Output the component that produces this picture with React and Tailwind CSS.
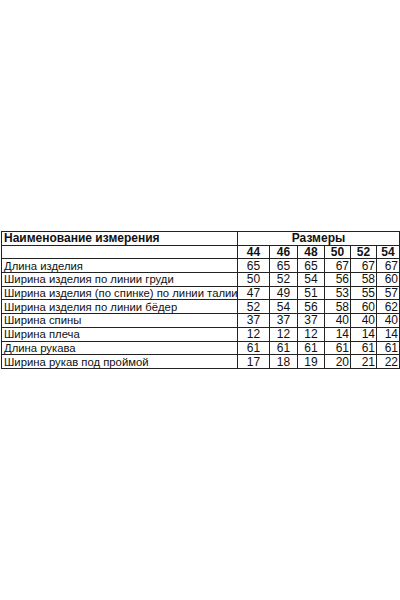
const sizes = ["44", "46", "48", "50", "52", "54"];

const rows = [
  { name: "Длина изделия", v: [65, 65, 65, 67, 67, 67] },
  { name: "Ширина изделия по линии груди", v: [50, 52, 54, 56, 58, 60] },
  { name: "Ширина изделия (по спинке) по линии талии", v: [47, 49, 51, 53, 55, 57] },
  { name: "Ширина изделия по линии бёдер", v: [52, 54, 56, 58, 60, 62] },
  { name: "Ширина спины", v: [37, 37, 37, 40, 40, 40] },
  { name: "Ширина плеча", v: [12, 12, 12, 14, 14, 14] },
  { name: "Длина рукава", v: [61, 61, 61, 61, 61, 61] },
  { name: "Ширина рукав под проймой", v: [17, 18, 19, 20, 21, 22] },
];

const cell = "border border-[#222] p-0 h-[13.7px] leading-[12px]";

export default function App() {
  return (
    <div className="w-[400px] h-[600px] bg-white pt-[231px] pl-px text-[12px] text-[#111]" style={{ fontFamily: '"Liberation Sans", Arial, sans-serif' }}>
      <table className="table-fixed border-collapse w-[398px]">
        <colgroup>
          <col className="w-[236px]" />
          <col className="w-[32px]" />
          <col className="w-[28px]" />
          <col className="w-[27px]" />
          <col className="w-[26px]" />
          <col className="w-[26px]" />
          <col className="w-[23px]" />
        </colgroup>
        <tbody>
          <tr>
            <td className={`${cell} pl-[2px] font-bold text-left`}>Наименование измерения</td>
            <td colSpan={6} className={`${cell} font-bold text-center`}>Размеры</td>
          </tr>
          <tr>
            <td className={cell}></td>
            {sizes.map((s) => (
              <td key={s} className={`${cell} font-bold text-center`}>{s}</td>
            ))}
          </tr>
          {rows.map((r) => (
            <tr key={r.name}>
              <td className={`${cell} pl-[2px] text-left whitespace-nowrap text-[11.3px]`}>{r.name}</td>
              {r.v.map((n, i) => (
                <td key={i} className={`${cell} ${i < 3 ? "text-center" : "text-right pr-px"}`}>{n}</td>
              ))}
            </tr>
          ))}
        </tbody>
      </table>
    </div>
  );
}
